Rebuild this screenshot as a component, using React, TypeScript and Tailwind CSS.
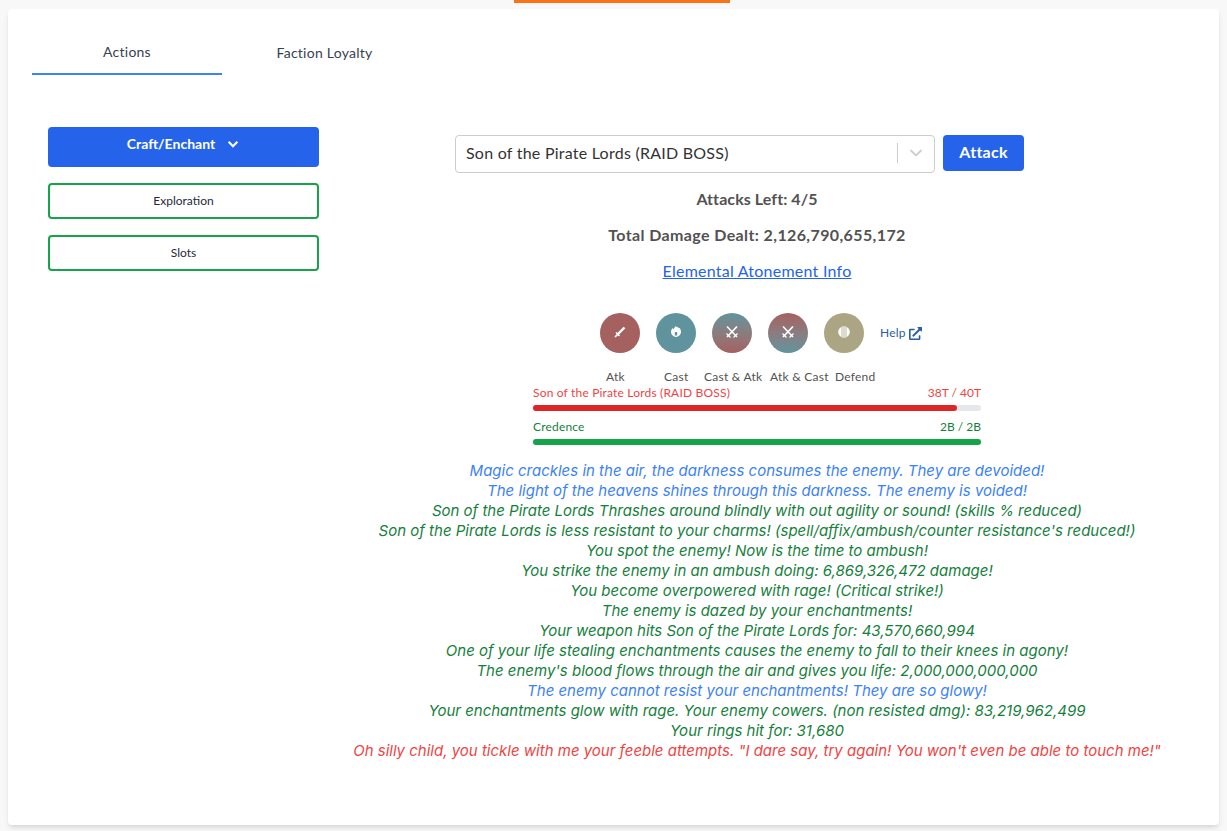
import { FaExternalLinkAlt } from "react-icons/fa";

const logs = [
  { text: "Magic crackles in the air, the darkness consumes the enemy. They are devoided!", color: "text-[#3b82f6]" },
  { text: "The light of the heavens shines through this darkness. The enemy is voided!", color: "text-[#3b82f6]" },
  { text: "Son of the Pirate Lords Thrashes around blindly with out agility or sound! (skills % reduced)", color: "text-[#15803d]" },
  { text: "Son of the Pirate Lords is less resistant to your charms! (spell/affix/ambush/counter resistance's reduced!)", color: "text-[#15803d]" },
  { text: "You spot the enemy! Now is the time to ambush!", color: "text-[#15803d]" },
  { text: "You strike the enemy in an ambush doing: 6,869,326,472 damage!", color: "text-[#15803d]" },
  { text: "You become overpowered with rage! (Critical strike!)", color: "text-[#15803d]" },
  { text: "The enemy is dazed by your enchantments!", color: "text-[#15803d]" },
  { text: "Your weapon hits Son of the Pirate Lords for: 43,570,660,994", color: "text-[#15803d]" },
  { text: "One of your life stealing enchantments causes the enemy to fall to their knees in agony!", color: "text-[#15803d]" },
  { text: "The enemy's blood flows through the air and gives you life: 2,000,000,000,000", color: "text-[#15803d]" },
  { text: "The enemy cannot resist your enchantments! They are so glowy!", color: "text-[#3b82f6]" },
  { text: "Your enchantments glow with rage. Your enemy cowers. (non resisted dmg): 83,219,962,499", color: "text-[#15803d]" },
  { text: "Your rings hit for: 31,680", color: "text-[#15803d]" },
  { text: "Oh silly child, you tickle with me your feeble attempts. \"I dare say, try again! You won't even be able to touch me!\"", color: "text-[#ef4444]" },
];

function Sword() {
  return (
    <svg viewBox="0 0 16 16" className="-mt-[3px] h-4 w-4" fill="none" stroke="white">
      <path d="M5.500 10.500 12.500 3.500" strokeWidth="2.400" />
      <path d="M4 8.500 7.500 12" strokeWidth="1.500" />
      <path d="M3 13 5.500 10.500" strokeWidth="1.700" />
    </svg>
  );
}

function CrossSwords() {
  return (
    <svg viewBox="0 0 16 16" className="-mt-[3px] h-4 w-4" fill="none" stroke="white">
      <path d="M3 13 13 2.500" strokeWidth="1.800" />
      <path d="M3 2.500 13 13" strokeWidth="1.500" />
      <path d="M2.500 9.500 6.500 13.500M13.500 9.500 9.500 13.500" strokeWidth="1.200" />
    </svg>
  );
}

function Flame() {
  return (
    <svg viewBox="0 0 16 16" className="-mt-[3px] h-4 w-4" fill="white">
      <path d="M8 2c.4 1.200 1.300 1.400 2 1 .1.800.7 1 1.800 1.300.9 1.200 1.400 2.500 1.200 4-.3 2.400-2.400 4.700-5 4.700s-4.700-2.300-5-4.700c-.2-1.700.6-3.300 1.900-4.300 0 .8.400 1.100.9 1.100C6 4 7 2.800 8 2z" />
      <path d="M6.800 8h2.400v3.500H6.800z" fill="#5f949e" />
    </svg>
  );
}

function Shield() {
  return (
    <svg viewBox="0 0 16 16" className="-mt-[3px] h-4 w-4">
      <circle cx="8" cy="8" r="5.800" fill="white" />
      <path d="M6 3v10M8 2.500v11M10 3v10" stroke="#aca584" strokeWidth="0.800" />
    </svg>
  );
}

function Bar({ name, value, color, label, width }: { name: string; value: string; color: string; label: string; width: string }) {
  return (
    <div>
      <div className={`flex justify-between text-xs leading-4 ${label}`}>
        <span className="tracking-[0.015em]">{name}</span>
        <span className="tracking-normal">{value}</span>
      </div>
      <div className="mt-1 h-1.5 w-full rounded-full bg-[#e5e7eb]">
        <div className={`h-1.5 rounded-full ${color} ${width}`}></div>
      </div>
    </div>
  );
}

export default function App() {
  return (
    <div className="relative h-[831px] overflow-hidden bg-[#f8f8f8] font-['Lato','Noto_Sans',sans-serif] tracking-[0.015em] text-[#374151]">
      <div className="absolute left-[514px] top-0 h-[3px] w-[216px] bg-[#f97316]"></div>
      <div className="mx-2 mt-[9px] h-[816px] rounded-sm bg-white pt-[30px] shadow-md">
        <div className="flex pl-6">
          <div className="h-[36px] w-[190px] border-b-2 border-[#3b82f6] pt-[3px] text-center text-sm leading-5">Actions</div>
          <div className="w-[205px] pt-[4px] text-center text-sm leading-5">Faction Loyalty</div>
        </div>
        <div className="mt-[52px] flex gap-4 pl-10 pr-10">
          <div className="w-[271px] shrink-0">
            <button className="flex h-10 w-full items-start justify-center gap-[11px] rounded-sm bg-[#2563eb] pt-[7px] text-sm font-bold leading-5 tracking-normal text-white">
              Craft/Enchant
              <svg viewBox="0 0 16 16" className="mt-[3px] h-3.5 w-3.5" fill="none" stroke="white" strokeWidth="2.500">
                <path d="M3 5.500l5 5 5-5" />
              </svg>
            </button>
            <button className="mt-4 h-9 w-full rounded-sm border-2 border-[#16a34a] text-xs tracking-normal text-[#1f2937]">Exploration</button>
            <button className="mt-4 h-9 w-full rounded-sm border-2 border-[#16a34a] text-xs tracking-normal text-[#1f2937]">Slots</button>
          </div>
          <div className="min-w-0 flex-1 pt-2">
            <div className="flex gap-2 pl-[120px]">
              <div className="flex h-[38px] w-[480px] items-center rounded border border-[#cccccc] pb-[2px] pl-[10px] pr-2 text-[#333333]">
                <span className="flex-1 text-base tracking-[0.015em]">Son of the Pirate Lords (RAID BOSS)</span>
                <span className="h-[20px] w-px bg-[#cccccc]"></span>
                <svg viewBox="0 0 20 20" className="ml-2 h-5 w-5" fill="#cccccc">
                  <path d="M4.500 7.100c.4-.4 1-.4 1.300 0L10 11.200l4.200-4.100c.3-.4.900-.4 1.300 0 .4.300.4.900 0 1.300l-4.800 4.600c-.4.300-1 .3-1.400 0L4.500 8.400c-.4-.4-.4-1 0-1.300z" />
                </svg>
              </div>
              <button className="h-9 w-[81px] rounded-sm bg-[#2563eb] pb-[2px] font-bold text-white">Attack</button>
            </div>
            <p className="mt-[14px] text-center font-bold leading-6 tracking-[0.005em] text-[#525252]">Attacks Left: 4/5</p>
            <p className="mt-3 text-center font-bold leading-6 tracking-[0.024em] text-[#525252]">Total Damage Dealt: 2,126,790,655,172</p>
            <p className="mt-3 text-center leading-6 text-[#2563eb] underline">Elemental Atonement Info</p>

            <div className="mt-[30px] flex items-center pl-[265px]">
              <div className="flex gap-4">
                <span className="flex h-10 w-10 items-center justify-center rounded-full bg-[#a56060]"><Sword /></span>
                <span className="flex h-10 w-10 items-center justify-center rounded-full bg-[#5f949e]"><Flame /></span>
                <span className="flex h-10 w-10 items-center justify-center rounded-full bg-gradient-to-b from-[#5f949e] to-[#a56060]"><CrossSwords /></span>
                <span className="flex h-10 w-10 items-center justify-center rounded-full bg-gradient-to-b from-[#a56060] to-[#5f949e]"><CrossSwords /></span>
                <span className="flex h-10 w-10 items-center justify-center rounded-full bg-[#aca584]"><Shield /></span>
              </div>
              <a className="ml-4 flex items-center gap-[3px] text-xs text-[#2a6199]">
                Help <FaExternalLinkAlt className="h-[13px] w-[13px]" />
              </a>
            </div>
            <div className="mt-[16px] flex pl-[271px] text-xs leading-4 text-[#525252]">
              <span className="w-[58px]">Atk</span>
              <span className="w-[40px]">Cast</span>
              <span className="w-[66px]">Cast &amp; Atk</span>
              <span className="w-[65px]">Atk &amp; Cast</span>
              <span>Defend</span>
            </div>
            <div className="ml-[198px] w-[448px]">
              <Bar name="Son of the Pirate Lords (RAID BOSS)" value="38T / 40T" color="bg-[#dc2626]" label="text-[#ef4444]" width="w-[94.6%]" />
              <div className="mt-2">
                <Bar name="Credence" value="2B / 2B" color="bg-[#16a34a]" label="text-[#15803d]" width="w-full" />
              </div>
            </div>
            <div className="mt-4 text-center font-['Inter','Noto_Sans',sans-serif] text-[15px] italic leading-5 tracking-normal">
              {logs.map((l) => (
                <p key={l.text} className={`whitespace-nowrap ${l.color}`}>{l.text}</p>
              ))}
            </div>
          </div>
        </div>
      </div>
    </div>
  );
}
